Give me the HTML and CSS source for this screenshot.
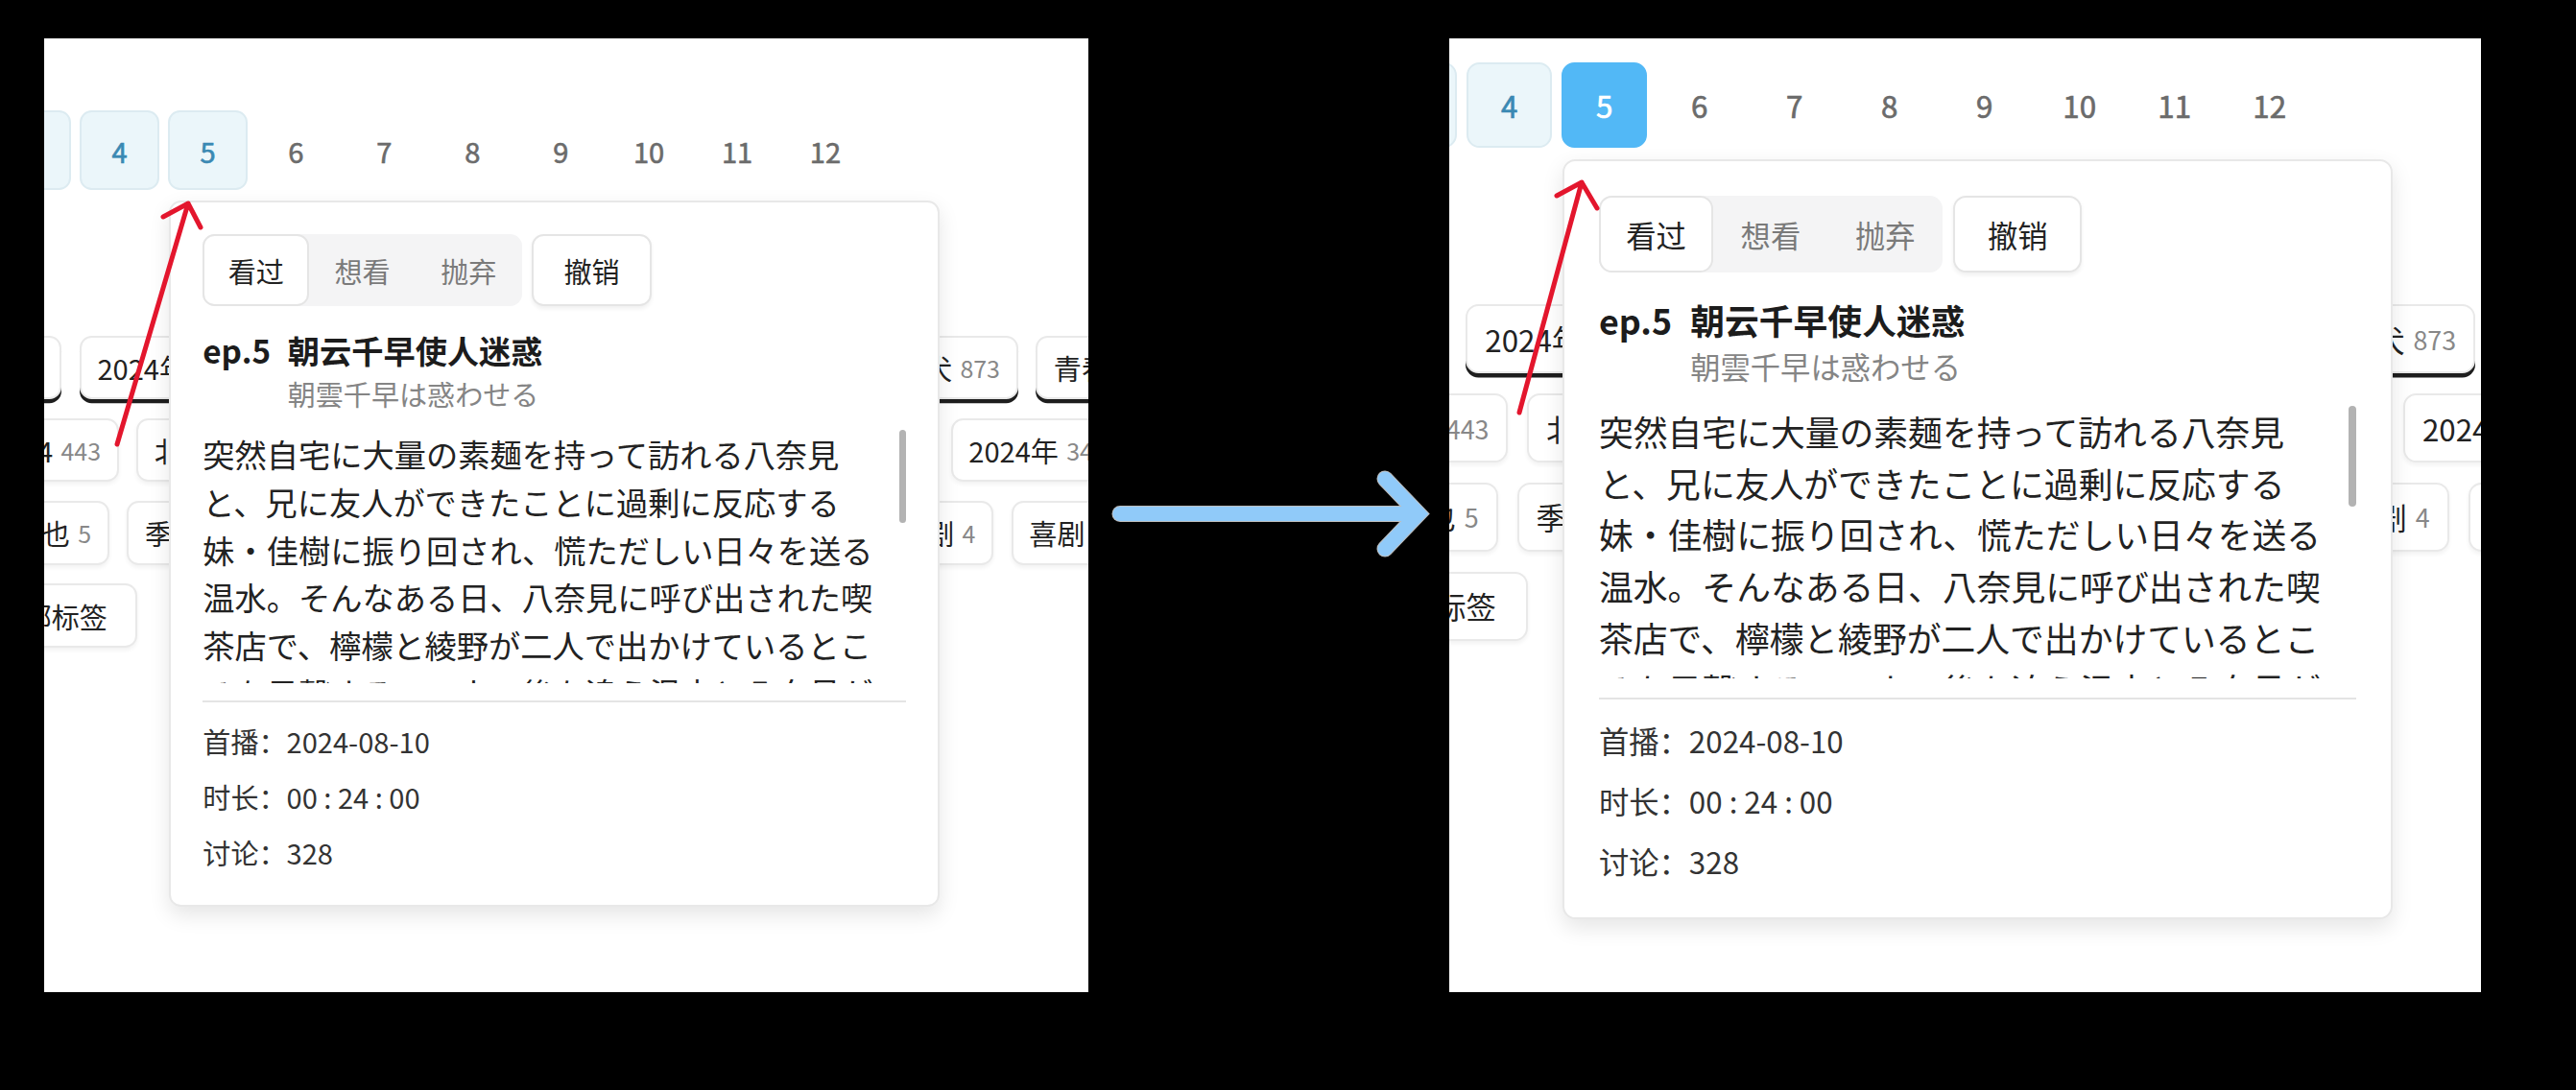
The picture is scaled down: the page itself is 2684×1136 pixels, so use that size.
FILE: index.html
```html
<!DOCTYPE html>
<html lang="zh-CN">
<head>
<meta charset="utf-8">
<title>章节弹窗 前后对比</title>
<link rel="stylesheet" href="styles.css">
</head>
<body>
<main class="stage">

  <section class="shot shot-before">
    <div class="app">
      <div class="page">
        <nav class="eps">
          <span class="ep watched">1</span>
          <span class="ep watched">2</span>
          <span class="ep watched">3</span>
          <span class="ep watched">4</span>
          <span class="ep watched">5</span>
          <span class="ep">6</span>
          <span class="ep">7</span>
          <span class="ep">8</span>
          <span class="ep">9</span>
          <span class="ep">10</span>
          <span class="ep">11</span>
          <span class="ep">12</span>
        </nav>
        <div class="tags">
          <div class="tag-row row-1">
            <span class="tag">轻改<em>1393</em></span>
            <span class="tag">2024年7月<em>1560</em></span>
            <span class="tag">校园恋爱<em>1236</em></span>
            <span class="tag">恋爱喜剧日常群像<em>305</em></span>
            <span class="tag">败犬<em>873</em></span>
            <span class="tag">青春<em>1150</em></span>
            <span class="tag">日常<em>920</em></span>
          </div>
          <div class="tag-row row-2">
            <span class="tag">2024<em>443</em></span>
            <span class="tag">北村翔太郎<em>421</em></span>
            <span class="tag">雨森たきび<em>87</em></span>
            <span class="tag">2024年七月新番动画<em>56</em></span>
            <span class="tag">2024年<em>342</em></span>
            <span class="tag">TV<em>310</em></span>
          </div>
          <div class="tag-row row-3">
            <span class="tag">小林拓也<em>5</em></span>
            <span class="tag">季番<em>12</em></span>
            <span class="tag">日常<em>48</em></span>
            <span class="tag">青春校园恋爱群像喜剧日常<em>7</em></span>
            <span class="tag">恋爱喜剧<em>4</em></span>
            <span class="tag">喜剧<em>96</em></span>
          </div>
          <div class="tag-row row-4">
            <span class="tag more">全部标签</span>
          </div>
        </div>

        <div class="popover">
          <div class="actions">
            <div class="seg">
              <span class="on">看过</span>
              <span>想看</span>
              <span>抛弃</span>
            </div>
            <span class="btn">撤销</span>
          </div>
          <div class="ep-title">
            <span class="ep-no">ep.5</span>
            <div class="ep-names">
              <div class="ep-name">朝云千早使人迷惑</div>
              <div class="ep-name-cn" lang="ja">朝雲千早は惑わせる</div>
            </div>
          </div>
          <div class="desc">
            <p lang="ja">突然自宅に大量の素麺を持って訪れる八奈見と、兄に友人ができたことに過剰に反応する妹・佳樹に振り回され、慌ただしい日々を送る温水。そんなある日、八奈見に呼び出された喫茶店で、檸檬と綾野が二人で出かけているところを目撃する。二人の後を追う温水と八奈見が目にしたものとは――。</p>
            <span class="thumb"></span>
          </div>
          <div class="info">
            <div>首播：2024-08-10</div>
            <div>时长：00 : 24 : 00</div>
            <div>讨论：328</div>
          </div>
        </div>
      </div>
    </div>
    <svg class="annot" viewBox="0 0 1088 994" aria-hidden="true">
      <path d="M76 423 L150 172 M124 186 L150 172 L163 197"/>
    </svg>
  </section>

  <svg class="flow-arrow" viewBox="0 0 376 994" aria-hidden="true">
    <g class="edge">
      <path d="M33 495.5 H342"/>
      <path d="M309 459 L344 495.5 L309 532"/>
    </g>
    <g class="core">
      <path d="M33 495.5 H342"/>
      <path d="M309 459 L344 495.5 L309 532"/>
    </g>
  </svg>

  <section class="shot shot-after">
    <div class="app">
      <div class="page">
        <nav class="eps">
          <span class="ep watched">1</span>
          <span class="ep watched">2</span>
          <span class="ep watched">3</span>
          <span class="ep watched">4</span>
          <span class="ep current">5</span>
          <span class="ep">6</span>
          <span class="ep">7</span>
          <span class="ep">8</span>
          <span class="ep">9</span>
          <span class="ep">10</span>
          <span class="ep">11</span>
          <span class="ep">12</span>
        </nav>
        <div class="tags">
          <div class="tag-row row-1">
            <span class="tag">轻改<em>1393</em></span>
            <span class="tag">2024年7月<em>1560</em></span>
            <span class="tag">校园恋爱<em>1236</em></span>
            <span class="tag">恋爱喜剧日常群像<em>305</em></span>
            <span class="tag">败犬<em>873</em></span>
            <span class="tag">青春<em>1150</em></span>
            <span class="tag">日常<em>920</em></span>
          </div>
          <div class="tag-row row-2">
            <span class="tag">2024<em>443</em></span>
            <span class="tag">北村翔太郎<em>421</em></span>
            <span class="tag">雨森たきび<em>87</em></span>
            <span class="tag">2024年七月新番动画<em>56</em></span>
            <span class="tag">2024年<em>342</em></span>
            <span class="tag">TV<em>310</em></span>
          </div>
          <div class="tag-row row-3">
            <span class="tag">小林拓也<em>5</em></span>
            <span class="tag">季番<em>12</em></span>
            <span class="tag">日常<em>48</em></span>
            <span class="tag">青春校园恋爱群像喜剧日常<em>7</em></span>
            <span class="tag">恋爱喜剧<em>4</em></span>
            <span class="tag">喜剧<em>96</em></span>
          </div>
          <div class="tag-row row-4">
            <span class="tag more">全部标签</span>
          </div>
        </div>

        <div class="popover">
          <div class="actions">
            <div class="seg">
              <span class="on">看过</span>
              <span>想看</span>
              <span>抛弃</span>
            </div>
            <span class="btn">撤销</span>
          </div>
          <div class="ep-title">
            <span class="ep-no">ep.5</span>
            <div class="ep-names">
              <div class="ep-name">朝云千早使人迷惑</div>
              <div class="ep-name-cn" lang="ja">朝雲千早は惑わせる</div>
            </div>
          </div>
          <div class="desc">
            <p lang="ja">突然自宅に大量の素麺を持って訪れる八奈見と、兄に友人ができたことに過剰に反応する妹・佳樹に振り回され、慌ただしい日々を送る温水。そんなある日、八奈見に呼び出された喫茶店で、檸檬と綾野が二人で出かけているところを目撃する。二人の後を追う温水と八奈見が目にしたものとは――。</p>
            <span class="thumb"></span>
          </div>
          <div class="info">
            <div>首播：2024-08-10</div>
            <div>时长：00 : 24 : 00</div>
            <div>讨论：328</div>
          </div>
        </div>
      </div>
    </div>
    <svg class="annot" viewBox="0 0 1075 994" aria-hidden="true">
      <path d="M73 390 L138 150 M112 164 L138 150 L154 177"/>
    </svg>
  </section>

</main>
</body>
</html>
```

FILE: styles.css
```css
* {
  box-sizing: border-box;
  margin: 0;
  padding: 0;
}

html,
body {
  width: 2684px;
  height: 1136px;
  background: #000;
  overflow: hidden;
}

body {
  font-family: "Noto Sans CJK SC", "Noto Sans", sans-serif;
}

.stage {
  display: flex;
  align-items: flex-start;
  padding: 40px 0 0 46px;
  height: 1136px;
}

/* screenshot frames */
.shot {
  position: relative;
  flex: none;
  height: 994px;
  overflow: hidden;
  background: #fff;
}

.shot-before {
  width: 1088px;
}

.shot-after {
  width: 1075px;
}

.app {
  display: flow-root;
  width: 620px;
  color: #222;
}

.shot-before .app {
  zoom: 2.078;
}

.shot-after .app {
  zoom: 2.2375;
}

.page {
  position: relative;
  padding-top: 36.1px;
}

.shot-after .page {
  margin: -25px 0 0 -9.8px;
}

/* episode buttons */
.eps {
  display: flex;
  gap: 4.25px;
  margin-left: -114.95px;
}

.ep {
  flex: none;
  width: 40px;
  height: 40px;
  display: flex;
  align-items: center;
  justify-content: center;
  border: 1px solid transparent;
  border-radius: 6px;
  font-size: 14px;
  color: #6b6b6b;
  -webkit-text-stroke: 0.3px currentColor;
}

.ep.watched {
  background: #ebf6fa;
  border-color: #dcebf1;
  color: #3a89b3;
}

.ep.current {
  background: #52b8f6;
  border-color: #52b8f6;
  color: #fff;
}

/* tags */
.tags {
  margin-top: 72.9px;
  display: flex;
  flex-direction: column;
  gap: 9.5px;
}

.tag-row {
  display: flex;
  gap: 9px;
}

.tag {
  flex: none;
  height: 32px;
  padding: 0 8px;
  display: flex;
  align-items: center;
  border: 1px solid #e9e9e9;
  border-radius: 6px;
  background: #fff;
  box-shadow: 0 1px 2px rgba(0, 0, 0, 0.05);
  font-size: 14px;
  color: #222;
  white-space: nowrap;
}

.tag em {
  margin-left: 4px;
  font-style: normal;
  font-size: 12px;
  color: #888;
}

.tag.more {
  padding: 0 14px;
}

.row-1 {
  margin-left: -67.8px;
}

.row-1 .tag {
  box-shadow: 0 2px 0 #1e1e1e;
}

.row-2 {
  margin-left: -35.6px;
}

.row-3 {
  margin-left: -52px;
}

.row-4 {
  margin-left: -39.2px;
}

/* popover */
.popover {
  position: absolute;
  left: 62.6px;
  top: 81.3px;
  width: 386.4px;
  padding: 16px;
  background: #fff;
  border: 1px solid #e8e8e8;
  border-radius: 6px;
  box-shadow: 0 4px 10px rgba(0, 0, 0, 0.1);
}

.actions {
  display: flex;
  gap: 5px;
}

.seg {
  display: flex;
  width: 160px;
  height: 36px;
  border-radius: 6px;
  background: #f4f4f5;
}

.seg span {
  width: 53.33px;
  display: flex;
  align-items: center;
  justify-content: center;
  border-radius: 6px;
  font-size: 14px;
  color: #7a7a7a;
}

.seg .on {
  background: #fff;
  border: 1px solid #e5e5e5;
  color: #222;
}

.btn {
  width: 60px;
  height: 36px;
  display: flex;
  align-items: center;
  justify-content: center;
  border: 1px solid #e5e5e5;
  border-radius: 6px;
  background: #fff;
  box-shadow: 0 1px 2px rgba(0, 0, 0, 0.06);
  font-size: 14px;
  color: #222;
}

.ep-title {
  display: flex;
  gap: 8.5px;
  margin-top: 10px;
}

.ep-no,
.ep-name {
  font-size: 16px;
  font-weight: 700;
  line-height: 24px;
  color: #1c1c1c;
}

.ep-name-cn {
  font-family: "Noto Sans CJK JP", "Noto Sans CJK SC", sans-serif;
  font-size: 14px;
  line-height: 20px;
  color: #858585;
}

.desc {
  position: relative;
  margin-top: 8px;
  height: 127px;
  overflow: hidden;
}

.desc p {
  padding-right: 10px;
  font-family: "Noto Sans CJK JP", "Noto Sans CJK SC", sans-serif;
  font-size: 16px;
  line-height: 24px;
  color: #222;
}

.thumb {
  position: absolute;
  right: 0;
  top: 0;
  width: 3.5px;
  height: 47px;
  border-radius: 2px;
  background: #b3b3b3;
}

.info {
  margin-top: 9px;
  padding-top: 9.4px;
  border-top: 1px solid #e4e4e4;
  display: flex;
  flex-direction: column;
  gap: 8px;
  font-size: 14px;
  line-height: 20px;
  color: #333;
}

/* annotation arrows */
.annot {
  position: absolute;
  left: 0;
  top: 0;
  width: 100%;
  height: 100%;
  fill: none;
  stroke: #e3162d;
  stroke-width: 5;
  stroke-linecap: round;
  stroke-linejoin: round;
}

.flow-arrow {
  flex: none;
  display: block;
  width: 376px;
  height: 994px;
}

.flow-arrow path {
  fill: none;
  stroke-linecap: round;
  stroke-linejoin: miter;
}

.flow-arrow .edge path {
  stroke: #bdbdbd;
  stroke-width: 17;
}

.flow-arrow .core path {
  stroke: #90caf9;
  stroke-width: 15;
}
```
